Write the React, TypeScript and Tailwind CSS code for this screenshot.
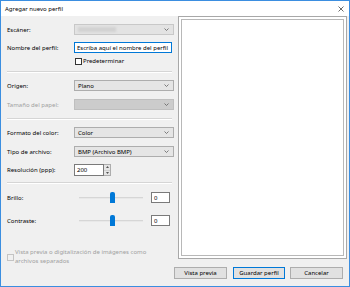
import type { ReactNode } from 'react';

const font = { fontFamily: '"Noto Sans", "Open Sans", Arial, sans-serif' };

function Chevron() {
  return (
    <svg width="5" height="3" viewBox="0 0 5 3" className="shrink-0">
      <path d="M0.5 0.5 L2.5 2.5 L4.5 0.5" fill="none" stroke="#606060" strokeWidth="0.8" />
    </svg>
  );
}

function Select({ value, disabled }: { value?: ReactNode; disabled?: boolean }) {
  return (
    <div
      className={`w-[100px] h-[11px] flex items-center justify-between pl-[3px] pr-[4px] border ${
        disabled ? 'bg-[#cccccc] border-[#bfbfbf]' : 'bg-[#e5e5e5] border-[#adadad]'
      }`}
    >
      <span className="text-[6px] leading-none text-black">{value}</span>
      <Chevron />
    </div>
  );
}

function Row({ label, children, className = '', muted }: { label: string; children: ReactNode; className?: string; muted?: boolean }) {
  return (
    <div className={`flex items-center ${className}`}>
      <span className={`w-[67px] text-[6px] leading-none ${muted ? 'text-[#a0a0a0]' : 'text-black'}`}>{label}</span>
      {children}
    </div>
  );
}

function Separator({ className = '' }: { className?: string }) {
  return <div className={`w-[165px] h-[2px] border-t border-[#d5d5d5] border-b border-b-white ${className}`} />;
}

function Slider() {
  return (
    <div className="flex items-center">
      <div className="w-[77px] h-[11px] relative flex items-center pl-[5px]">
        <div className="w-[64px] h-[2px] bg-[#d6d6d6] border-b border-[#e8e8e8]" />
        <div className="absolute left-[36px] top-[0px] w-[5px] h-[11px] bg-[#0078d7] rounded-t-[2px]" />
      </div>
      <div className="w-[19px] h-[11px] bg-white border border-[#7a7a7a] flex items-center pl-[2px] text-[6px] leading-none">0</div>
    </div>
  );
}

function Button({ children, primary, className = '' }: { children: ReactNode; primary?: boolean; className?: string }) {
  return (
    <div
      className={`h-[12px] flex items-center justify-center bg-[#e1e1e1] border text-[6px] leading-none text-black ${
        primary ? 'border-[#0078d7]' : 'border-[#adadad]'
      } ${className}`}
    >
      {children}
    </div>
  );
}

export default function App() {
  return (
    <div style={font} className="w-[350px] h-[287px] border border-[#3b8ee0] bg-[#f0f0f0] flex flex-col overflow-hidden select-none">
      {/* Title bar */}
      <div className="h-[15px] bg-white flex items-center justify-between pl-[4px] pr-[5px] shrink-0">
        <span className="text-[6px] leading-none text-black">Agregar nuevo perfil</span>
        <svg width="6" height="6" viewBox="0 0 6 6">
          <path d="M0.5 0.5 L5.5 5.5 M5.5 0.5 L0.5 5.5" stroke="#444" strokeWidth="0.8" />
        </svg>
      </div>

      <div className="flex h-[251px] shrink-0">
        {/* Left form */}
        <div className="w-[177px] pl-[6px] flex flex-col">
          <Row label="Escáner:" className="mt-[8px]">
            <div className="w-[100px] h-[11px] flex items-center justify-between pl-[3px] pr-[4px] border bg-[#e3e3e3] border-[#c8c8c8]">
              <div className="w-[38px] h-[5px] bg-[#d2d2d2] blur-[1px]" />
              <Chevron />
            </div>
          </Row>
          <Row label="Nombre del perfil:" className="mt-[7px]">
            <div className="w-[98px] h-[11px] bg-white border border-[#0078d7] flex items-center pl-[2px] text-[6px] leading-none whitespace-nowrap overflow-hidden">
              Escriba aquí el nombre del perfil
            </div>
          </Row>
          <div className="flex items-center mt-[4px] h-[8px] pl-[68px] gap-[1px]">
            <div className="w-[7px] h-[7px] bg-white border border-[#333]" />
            <span className="text-[6px] leading-none">Predeterminar</span>
          </div>
          <Separator className="mt-[6px]" />
          <Row label="Origen:" className="mt-[7px]">
            <Select value="Plano" />
          </Row>
          <Row label="Tamaño del papel:" className="mt-[8px]" muted>
            <Select disabled />
          </Row>
          <Separator className="mt-[8px]" />
          <Row label="Formato del color:" className="mt-[7px]">
            <Select value="Color" />
          </Row>
          <Row label="Tipo de archivo:" className="mt-[8px]">
            <Select value="BMP (Archivo BMP)" />
          </Row>
          <Row label="Resolución (ppp):" className="mt-[7px]">
            <div className="flex h-[12px]">
              <div className="w-[30px] h-[12px] bg-white border border-[#7a7a7a] flex items-center pl-[2px] text-[6px] leading-none">200</div>
              <div className="w-[7px] h-[12px] flex flex-col border border-l-0 border-[#adadad] bg-[#e5e5e5]">
                <div className="flex-1 flex items-center justify-center border-b border-[#cfcfcf]">
                  <svg width="3" height="2" viewBox="0 0 3 2"><path d="M0 2 L1.5 0 L3 2 Z" fill="#555" /></svg>
                </div>
                <div className="flex-1 flex items-center justify-center">
                  <svg width="3" height="2" viewBox="0 0 3 2"><path d="M0 0 L1.5 2 L3 0 Z" fill="#555" /></svg>
                </div>
              </div>
            </div>
          </Row>
          <Separator className="mt-[6px]" />
          <Row label="Brillo:" className="mt-[8px]">
            <Slider />
          </Row>
          <Row label="Contraste:" className="mt-[12px]">
            <Slider />
          </Row>
          <div className="flex items-center mt-[22px] gap-[1px]">
            <div className="w-[7px] h-[7px] bg-[#f0f0f0] border border-[#c4c4c4] shrink-0" />
            <span className="text-[6px] leading-[9px] text-[#a0a0a0] w-[140px]">
              Vista previa o digitalización de imágenes como archivos separados
            </span>
          </div>
        </div>

        {/* Preview */}
        <div className="w-[169px] h-[243px] border border-[#a8a8a8] bg-white p-[2px]">
          <div className="w-full h-full border border-[#b8b8b8] bg-white" />
        </div>
      </div>

      {/* Buttons */}
      <div className="flex justify-end pr-[6px]">
        <Button className="w-[53px]">Vista previa</Button>
        <Button primary className="w-[52px] ml-[6px]">Guardar perfil</Button>
        <Button className="w-[53px] ml-[5px]">Cancelar</Button>
      </div>
    </div>
  );
}
